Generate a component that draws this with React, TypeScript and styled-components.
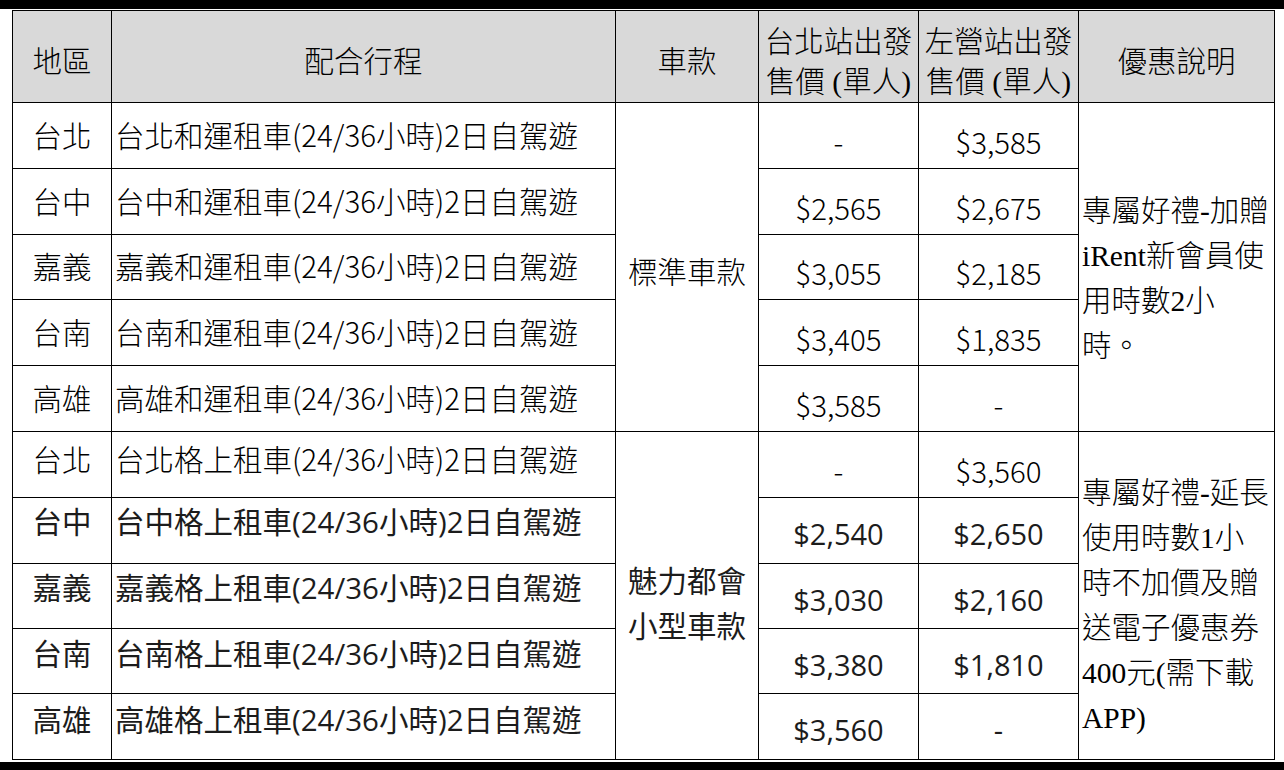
import React from "react";
import styled, { createGlobalStyle, css } from "styled-components";

const GlobalStyle = createGlobalStyle`
  html, body { margin: 0; padding: 0; background: #ffffff; }
  #root { width: 1284px; height: 770px; }
`;

type Face = "ming" | "hei";

const CJK = `"Noto Sans CJK TC", "Noto Sans CJK SC", sans-serif`;

const faceFont = (face: Face) =>
  face === "ming"
    ? css`
        font-family: ${CJK};
        font-weight: 300;
        color: #000;
      `
    : css`
        font-family: "Open Sans", ${CJK};
        font-weight: 400;
        color: #1c1c1c;
      `;

const Page = styled.div`
  width: 1284px;
  height: 770px;
  display: flex;
  flex-direction: column;
  overflow: hidden;
  background: #fff;
`;

const Bar = styled.div<{ $h: number }>`
  height: ${(p) => p.$h}px;
  background: #000;
  flex: none;
`;

const TableArea = styled.div`
  flex: 1;
  padding: 1px 10px 0 12px;
`;

const Table = styled.table`
  border-collapse: collapse;
  table-layout: fixed;
  width: 1262px;
  font-size: 29.5px;
`;

const HeadRow = styled.tr`
  height: 92px;
`;

const BodyRow = styled.tr<{ $h: number }>`
  height: ${(p) => p.$h}px;
`;

const Th = styled.th`
  background: #d9d9d9;
  border: 1px solid #000;
  font-family: "Liberation Serif", ${CJK};
  font-weight: 300;
  color: #000;
  text-align: center;
  vertical-align: middle;
  padding: 10px 0 0 0;
  line-height: 40px;
  white-space: nowrap;
`;

const Td = styled.td`
  border: 1px solid #000;
  padding: 0;
  white-space: nowrap;
  vertical-align: middle;
`;

const RegionCell = styled(Td)<{ $face: Face; $shift: number }>`
  ${(p) => faceFont(p.$face)};
  text-align: center;
  padding-bottom: ${(p) => p.$shift}px;
`;

const TripCell = styled(Td)<{ $face: Face; $shift: number }>`
  ${(p) => faceFont(p.$face)};
  text-align: left;
  padding-left: 3px;
  padding-bottom: ${(p) => p.$shift}px;
`;

const CarCell = styled(Td)<{ $face: Face; $pad: number }>`
  ${(p) => faceFont(p.$face)};
  text-align: center;
  line-height: 45px;
  padding-top: ${(p) => p.$pad}px;
`;

const PriceCell = styled(Td)<{ $face: Face }>`
  ${(p) => faceFont(p.$face)};
  text-align: center;
  padding-top: 10px;
  ${(p) =>
    p.$face === "hei" &&
    css`
      font-size: 29px;
      padding-top: 6px;
    `}
`;

const DescCell = styled(Td)<{ $pad: number }>`
  font-family: "Liberation Serif", ${CJK};
  font-weight: 300;
  color: #000;
  text-align: left;
  padding: ${(p) => p.$pad}px 0 0 3px;
  line-height: 45px;
`;

type Row = {
  region: string;
  trip: string;
  taipei: string;
  zuoying: string;
  face: Face;
  shift: number;
  h: number;
};

const heRows: Row[] = [
  { region: "台北", trip: "台北和運租車(24/36小時)2日自駕遊", taipei: "-", zuoying: "$3,585", face: "ming", shift: 4, h: 66 },
  { region: "台中", trip: "台中和運租車(24/36小時)2日自駕遊", taipei: "$2,565", zuoying: "$2,675", face: "ming", shift: 4, h: 66 },
  { region: "嘉義", trip: "嘉義和運租車(24/36小時)2日自駕遊", taipei: "$3,055", zuoying: "$2,185", face: "ming", shift: 4, h: 65 },
  { region: "台南", trip: "台南和運租車(24/36小時)2日自駕遊", taipei: "$3,405", zuoying: "$1,835", face: "ming", shift: 4, h: 66 },
  { region: "高雄", trip: "高雄和運租車(24/36小時)2日自駕遊", taipei: "$3,585", zuoying: "-", face: "ming", shift: 4, h: 66 },
];

const geRows: Row[] = [
  { region: "台北", trip: "台北格上租車(24/36小時)2日自駕遊", taipei: "-", zuoying: "$3,560", face: "ming", shift: 14, h: 66 },
  { region: "台中", trip: "台中格上租車(24/36小時)2日自駕遊", taipei: "$2,540", zuoying: "$2,650", face: "hei", shift: 20, h: 66 },
  { region: "嘉義", trip: "嘉義格上租車(24/36小時)2日自駕遊", taipei: "$3,030", zuoying: "$2,160", face: "hei", shift: 20, h: 65 },
  { region: "台南", trip: "台南格上租車(24/36小時)2日自駕遊", taipei: "$3,380", zuoying: "$1,810", face: "hei", shift: 18, h: 65 },
  { region: "高雄", trip: "高雄格上租車(24/36小時)2日自駕遊", taipei: "$3,560", zuoying: "-", face: "hei", shift: 16, h: 66 },
];

type Group = {
  rows: Row[];
  car: string[];
  carFace: Face;
  carPad: number;
  desc: string[];
  descPad: number;
};

const groups: Group[] = [
  {
    rows: heRows,
    car: ["標準車款"],
    carFace: "ming",
    carPad: 6,
    desc: ["專屬好禮-加贈", "iRent新會員使", "用時數2小", "時。"],
    descPad: 24,
  },
  {
    rows: geRows,
    car: ["魅力都會", "小型車款"],
    carFace: "hei",
    carPad: 14,
    desc: ["專屬好禮-延長", "使用時數1小", "時不加價及贈", "送電子優惠券", "400元(需下載", "APP)"],
    descPad: 20,
  },
];

const Lines: React.FC<{ lines: string[] }> = ({ lines }) => (
  <>
    {lines.map((l, i) => (
      <React.Fragment key={i}>
        {i > 0 && <br />}
        {l}
      </React.Fragment>
    ))}
  </>
);

export default function App() {
  return (
    <>
      <GlobalStyle />
      <Page>
        <Bar $h={9} />
        <TableArea>
          <Table>
            <colgroup>
              <col style={{ width: 99 }} />
              <col style={{ width: 504 }} />
              <col style={{ width: 143 }} />
              <col style={{ width: 160 }} />
              <col style={{ width: 160 }} />
              <col style={{ width: 196 }} />
            </colgroup>
            <thead>
              <HeadRow>
                <Th>地區</Th>
                <Th>配合行程</Th>
                <Th>車款</Th>
                <Th>
                  <Lines lines={["台北站出發", "售價 (單人)"]} />
                </Th>
                <Th>
                  <Lines lines={["左營站出發", "售價 (單人)"]} />
                </Th>
                <Th>優惠說明</Th>
              </HeadRow>
            </thead>
            <tbody>
              {groups.map((g, gi) =>
                g.rows.map((r, ri) => (
                  <BodyRow key={`${gi}-${ri}`} $h={r.h}>
                    <RegionCell $face={r.face} $shift={r.shift}>
                      {r.region}
                    </RegionCell>
                    <TripCell $face={r.face} $shift={r.shift}>
                      {r.trip}
                    </TripCell>
                    {ri === 0 && (
                      <CarCell rowSpan={g.rows.length} $face={g.carFace} $pad={g.carPad}>
                        <Lines lines={g.car} />
                      </CarCell>
                    )}
                    <PriceCell $face={r.face}>{r.taipei}</PriceCell>
                    <PriceCell $face={r.face}>{r.zuoying}</PriceCell>
                    {ri === 0 && (
                      <DescCell rowSpan={g.rows.length} $pad={g.descPad}>
                        <Lines lines={g.desc} />
                      </DescCell>
                    )}
                  </BodyRow>
                ))
              )}
            </tbody>
          </Table>
        </TableArea>
        <Bar $h={8} />
      </Page>
    </>
  );
}
